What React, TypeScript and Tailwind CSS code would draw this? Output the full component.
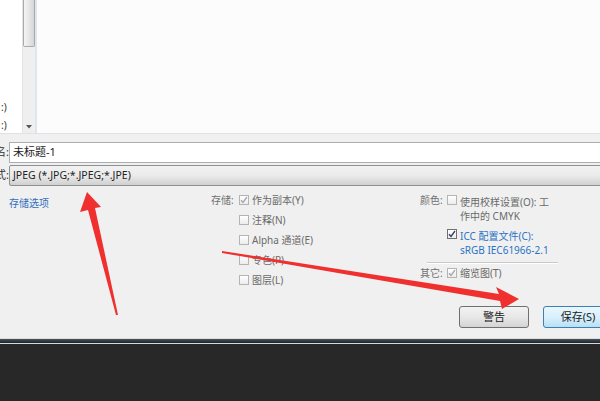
import React from "react";

const font = { fontFamily: '"Noto Sans", "Noto Sans CJK SC", sans-serif' };

type BoxProps = { checked?: boolean; enabled?: boolean };

const Box = ({ checked, enabled }: BoxProps) => (
  <span
    className={`flex h-[10px] w-[10px] shrink-0 items-center justify-center border bg-gradient-to-b from-white to-[#ececec] ${
      enabled ? "border-[#707070]" : "border-[#b4b4b4]"
    }`}
  >
    {checked && (
      <svg width="8" height="8" viewBox="0 0 8 8">
        <path
          d="M1 4.2 L3 6.5 L7 1"
          fill="none"
          stroke={enabled ? "#2a3a6a" : "#a8a8a8"}
          strokeWidth="1.3"
        />
      </svg>
    )}
  </span>
);

const Row = ({
  label,
  text,
  checked,
}: {
  label?: string;
  text: string;
  checked?: boolean;
}) => (
  <div className="flex h-[20px] items-center">
    <span className="w-[28px] text-[#707070]">{label}</span>
    <Box checked={checked} />
    <span className="ml-[3px] text-[#6a6a6a]">{text}</span>
  </div>
);

export default function App() {
  return (
    <div
      className="relative flex h-[401px] w-[600px] flex-col overflow-hidden bg-[#f0f0f0]"
      style={font}
    >
      {/* file list + scrollbar */}
      <div className="flex h-[133px] shrink-0">
        <div className="relative w-[22px] bg-white text-[10px] leading-none text-[#333]">
          <div className="pt-[102px] pl-[1px]">:)</div>
          <div className="pt-[8px] pl-[1px]">:)</div>
        </div>
        <div className="flex w-[14px] flex-col border-x border-[#e4e4e4] bg-[#efefef]">
          <div className="h-[47px] rounded-b-[2px] border border-t-0 border-[#a9a9a9] bg-gradient-to-r from-[#f4f4f4] via-[#e6e6e6] to-[#d6d6d6]" />
          <div className="flex flex-1 items-end justify-center pb-[4px]">
            <svg width="6" height="4" viewBox="0 0 6 4">
              <path d="M0 0 H6 L3 3.5 Z" fill="#555" />
            </svg>
          </div>
        </div>
        <div className="flex-1 border-l border-[#d9e6f4] bg-[#fcfcfc]" />
      </div>

      {/* dialog body */}
      <div className="flex h-[205px] shrink-0 flex-col border-t border-[#e2e2e2]">
        <div className="mt-[8px] -mr-[6px] flex h-[21px] items-center">
          <div className="flex w-[9px] shrink-0 justify-end overflow-hidden whitespace-nowrap text-[11px] text-[#333]">
            文件名:
          </div>
          <div className="flex h-full flex-1 items-center border border-[#abadb3] bg-white pl-[3px] text-[11px] text-[#222]">
            未标题-1
          </div>
        </div>
        <div className="mt-[2px] -mr-[6px] flex h-[21px] items-center">
          <div className="flex w-[9px] shrink-0 justify-end overflow-hidden whitespace-nowrap text-[11px] text-[#333]">
            格式:
          </div>
          <div className="flex h-full flex-1 items-center rounded-l-[2px] border border-[#8e8f8f] bg-gradient-to-b from-[#f2f2f2] via-[#ebebeb] to-[#d0d0d0] pl-[3px] text-[10.5px] text-[#222]">
            JPEG (*.JPG;*.JPEG;*.JPE)
          </div>
        </div>

        <div className="mt-[4px] flex text-[10px] leading-none">
          <div className="w-[211px] pl-[9px] pt-[8px] text-[#2f6fbf]">存储选项</div>

          <div className="w-[209px]">
            <Row label="存储:" text="作为副本(Y)" checked />
            <Row text="注释(N)" />
            <Row text="Alpha 通道(E)" />
            <Row text="专色(P)" />
            <Row text="图层(L)" />
          </div>

          <div className="w-[140px] pt-[5px]">
            <div className="flex">
              <span className="w-[27px] text-[#707070]">颜色:</span>
              <Box />
              <span className="ml-[3px] w-[96px] leading-[14px] text-[#6a6a6a]">
                使用校样设置(O): 工作中的 CMYK
              </span>
            </div>
            <div className="mt-[6px] flex">
              <span className="w-[27px]" />
              <Box checked enabled />
              <span className="ml-[3px] leading-[14px] text-[#2a72c6]">
                ICC 配置文件(C):
                <br />
                sRGB IEC61966-2.1
              </span>
            </div>
            <div className="ml-[7px] mt-[5px] h-[2px] w-[131px] border-t border-b border-t-[#c9c9c9] border-b-white" />
            <div className="mt-[4px] flex items-center">
              <span className="w-[27px] text-[#707070]">其它:</span>
              <Box checked />
              <span className="ml-[3px] text-[#6a6a6a]">缩览图(T)</span>
            </div>
          </div>
        </div>

        <div className="mt-auto mb-[10px] flex justify-end gap-[14px] text-[11px] text-[#222]">
          <button className="h-[22px] w-[70px] rounded-[3px] border border-[#707070] bg-gradient-to-b from-[#f2f2f2] via-[#e8e8e8] to-[#d4d4d4]">
            警告
          </button>
          <button className="-mr-[13px] h-[22px] w-[70px] rounded-[3px] border border-[#3c7fb1] bg-gradient-to-b from-[#e9f6fd] via-[#d9f0fc] to-[#b8e0f6]">
            保存(S)
          </button>
        </div>
      </div>

      {/* dark strip below the dialog */}
      <div className="h-[1px] bg-[#dcdcdc]" />
      <div className="h-[4px] bg-gradient-to-b from-[#4a525a] to-[#1b232c]" />
      <div className="h-[1px] bg-[#d8d8d8]" />
      <div className="flex-1 bg-[#282828]" />

      {/* red annotation arrows */}
      <svg className="pointer-events-none absolute left-0 top-0" width="600" height="401">
        <polygon
          points="87,192 101,207 95,208 118,315 116,315 88,210 80,212"
          fill="#f0302f"
        />
        <polygon
          points="222,251 499,294 496,287 519,299 502,309 500,301 222,253"
          fill="#f0302f"
        />
      </svg>
    </div>
  );
}
